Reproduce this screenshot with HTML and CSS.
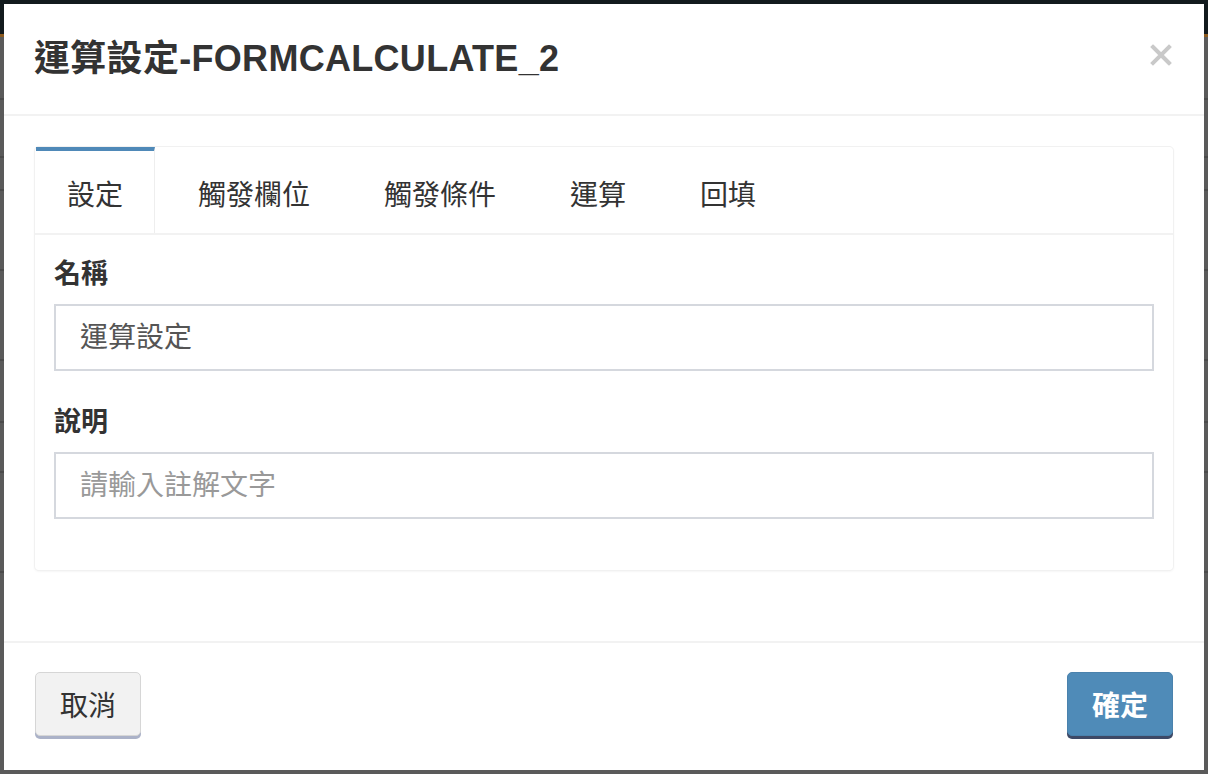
FILE: index.html
```html
<!DOCTYPE html>
<html lang="zh-Hant">
<head>
<meta charset="utf-8">
<title>運算設定</title>
<link rel="stylesheet" href="styles.css">
</head>
<body>
<div class="backdrop">
  <div class="topbar"></div>
  <div class="bg-row r1"></div>
  <div class="bg-row r2"></div>
  <div class="bg-row r3"></div>
  <div class="bg-row r4"></div>
  <div class="bg-row r5"></div>
  <div class="bg-row r6"></div>
  <div class="bg-row r7"></div>
  <div class="bg-row r8"></div>
</div>

<div class="modal">
  <div class="modal-header">
    <h1 class="modal-title">運算設定-FORMCALCULATE_2</h1>
    <button class="close" type="button" aria-label="close">
      <svg width="22" height="22" viewBox="0 0 22 22"><path d="M3 3 L19 19 M19 3 L3 19" stroke="#c9c9c9" stroke-width="4" stroke-linecap="square" fill="none"/></svg>
    </button>
  </div>

  <div class="modal-body">
    <div class="panel">
      <ul class="tabs">
        <li class="tab active">設定</li>
        <li class="tab">觸發欄位</li>
        <li class="tab">觸發條件</li>
        <li class="tab">運算</li>
        <li class="tab">回填</li>
      </ul>
      <div class="tab-content">
        <div class="form-group">
          <label class="label">名稱</label>
          <div class="input">運算設定</div>
        </div>
        <div class="form-group">
          <label class="label">說明</label>
          <div class="input placeholder">請輸入註解文字</div>
        </div>
      </div>
    </div>
  </div>

  <div class="modal-footer">
    <button class="btn btn-default" type="button">取消</button>
    <button class="btn btn-primary" type="button">確定</button>
  </div>
</div>
</body>
</html>
```

FILE: styles.css
```css
* { box-sizing: border-box; }

html, body {
  margin: 0;
  padding: 0;
  height: 100%;
}

body {
  background: #5a5a5a;
  font-family: "Liberation Sans", "Noto Sans CJK TC", sans-serif;
  color: #333;
  overflow: hidden;
}

.backdrop {
  display: flex;
  flex-direction: column;
}

.topbar {
  height: 37px;
  background: #121a1d;
  border-bottom: 3px solid #8c5a1e;
}

.bg-row {
  border-bottom: 2px solid #4b4b4b;
}
.r1 { height: 63px; }
.r2 { height: 58px; }
.r3 { height: 33px; }
.r4 { height: 80px; }
.r5 { height: 90px; }
.r6 { height: 62px; }
.r7 { height: 50px; }
.r8 { height: 100px; }

.modal {
  position: fixed;
  top: 4px;
  left: 4px;
  right: 4px;
  bottom: 4px;
  background: #fff;
  display: flex;
  flex-direction: column;
}

.modal-header {
  display: flex;
  justify-content: space-between;
  align-items: flex-start;
  padding: 35px 32px 35px 30px;
  border-bottom: 2px solid #f2f2f2;
}

.modal-title {
  margin: 0;
  font-size: 36px;
  line-height: 40px;
  font-weight: 600;
  letter-spacing: 0.3px;
  color: #333;
}

.close {
  border: 0;
  background: none;
  padding: 0;
  margin-top: 5px;
  width: 22px;
  height: 22px;
  display: block;
}
.close svg { display: block; }

.modal-body {
  flex: 1;
  padding: 31px 31px 70px;
}

.panel {
  background: #fff;
  border-radius: 4px;
  box-shadow: 0 0 0 1px #f1f1f1, 0 1px 3px rgba(0, 0, 0, 0.08);
}

.tabs {
  list-style: none;
  margin: 0;
  padding: 0;
  display: flex;
  border-bottom: 2px solid #f2f2f2;
}

.tab {
  font-size: 28px;
  line-height: 40px;
  padding: 25px 31px 17px;
  margin-right: 12px;
  border-top: 4px solid transparent;
  color: #333;
}

.tab.active {
  border-top-color: #4f89b8;
  border-right: 1px solid #eeeeee;
  margin-left: 1px;
}

.tab-content {
  padding: 19px 19px 20px;
}

.form-group {
  margin-bottom: 31px;
}

.label {
  display: block;
  font-size: 27px;
  line-height: 40px;
  font-weight: 700;
  color: #333;
  margin-bottom: 10px;
}

.input {
  height: 67px;
  border: 2px solid #d5d8de;
  padding: 1px 24px 0;
  font-size: 28px;
  line-height: 62px;
  color: #555;
}

.input.placeholder {
  color: #999;
}

.modal-footer {
  display: flex;
  justify-content: space-between;
  align-items: flex-start;
  padding: 29px 31px 34px;
  border-top: 2px solid #f2f2f2;
}

.btn {
  font-family: "Liberation Sans", "Noto Sans CJK TC", sans-serif;
  font-size: 28px;
  line-height: 40px;
  padding: 14px 24px 8px;
  border-radius: 5px;
  border: 1px solid #d6d6d6;
  cursor: pointer;
}

.btn-default {
  background: #f2f2f2;
  color: #333;
  box-shadow: 0 3px 0 #abb2c8;
}

.btn-primary {
  background: #4f8bb8;
  border-color: #4a82ad;
  color: #fff;
  font-weight: 600;
  box-shadow: 0 3px 0 #3d4966;
}
```
